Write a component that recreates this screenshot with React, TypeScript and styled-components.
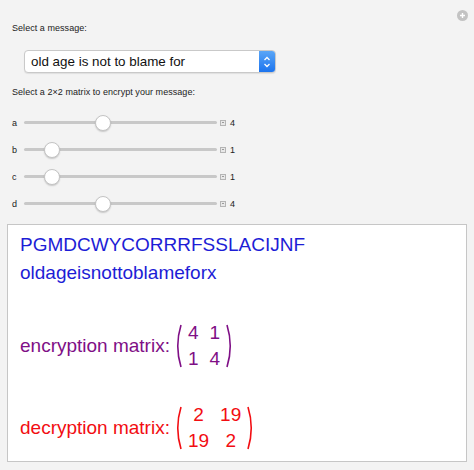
import React from 'react'
import styled, { createGlobalStyle } from 'styled-components'

const GlobalStyle = createGlobalStyle`
  html, body {
    margin: 0;
    padding: 0;
    background: #f3f3f3;
  }
  * {
    box-sizing: border-box;
  }
`

const Panel = styled.div`
  position: relative;
  width: 474px;
  height: 470px;
  background: #f3f3f3;
  padding: 22px 7px 0 7px;
  font-family: 'Liberation Sans', Arial, sans-serif;
`

const PlusBadge = styled.div`
  position: absolute;
  top: 10px;
  right: 6px;
  width: 11px;
  height: 11px;
  border-radius: 50%;
  background: #c3c3c3;
  display: flex;
  align-items: center;
  justify-content: center;
`

const Controls = styled.div`
  padding-left: 5px;
  display: flex;
  flex-direction: column;
`

const Label = styled.div<{ $top: number }>`
  font-size: 9px;
  line-height: 12px;
  color: #222;
  letter-spacing: 0.05px;
  margin-top: ${(p) => p.$top}px;
`

const Popup = styled.div`
  margin-top: 16px;
  margin-left: 12px;
  width: 252px;
  height: 23px;
  background: #fff;
  border: 1px solid #c9c9c9;
  border-radius: 4px;
  box-shadow: 0 1px 1px rgba(0, 0, 0, 0.08);
  display: flex;
  align-items: center;
  justify-content: space-between;
  overflow: hidden;
`

const PopupText = styled.span`
  font-size: 13.4px;
  color: #111;
  padding-left: 6px;
`

const Stepper = styled.div`
  width: 16px;
  height: 100%;
  background: linear-gradient(#5aa6f7, #1c74ee);
  display: flex;
  align-items: center;
  justify-content: center;
`

const Sliders = styled.div`
  margin-top: 11px;
  display: flex;
  flex-direction: column;
`

const SliderRow = styled.div`
  height: 27px;
  display: grid;
  grid-template-columns: 9px 193px 6px auto;
  column-gap: 3px;
  align-items: center;
  font-size: 9px;
  color: #222;
`

const SliderLabel = styled.span`
  color: #222;
`

const Track = styled.div`
  position: relative;
  height: 3px;
  border-radius: 2px;
  background: #c8c8c8;
`

const Thumb = styled.div`
  position: absolute;
  top: 50%;
  width: 16px;
  height: 16px;
  margin-left: -8px;
  margin-top: -8px;
  border-radius: 50%;
  background: #fff;
  border: 1px solid #c4c4c4;
  box-shadow: 0 1px 1.5px rgba(0, 0, 0, 0.18);
`

const SquarePlus = styled.div`
  width: 6px;
  height: 6px;
  border: 1px solid #b4b4b4;
  background: #e8e8e8;
  position: relative;
  &::before {
    content: '';
    position: absolute;
    left: 1px;
    right: 1px;
    top: 1.5px;
    height: 1px;
    background: #9a9a9a;
  }
`

const Value = styled.span`
  margin-left: 1px;
  font-size: 9px;
  color: #222;
`

const Output = styled.div`
  margin-top: 7px;
  width: 460px;
  height: 238px;
  background: #fff;
  border: 1px solid #c6c6c6;
  padding: 6px 12px 0 12px;
  font-size: 19px;
  font-family: 'Liberation Sans', Arial, sans-serif;
`

const Line = styled.div<{ $color: string }>`
  line-height: 28px;
  color: ${(p) => p.$color};
`

const MatrixRow = styled.div<{ $color: string; $top: number }>`
  display: flex;
  align-items: center;
  margin-top: ${(p) => p.$top}px;
  color: ${(p) => p.$color};
`

const MatrixWrap = styled.div`
  display: flex;
  align-items: center;
  margin-left: 5px;
`

const Grid = styled.div`
  display: grid;
  grid-template-columns: auto auto;
  column-gap: 11px;
  padding: 0 6px;
  line-height: 26px;
  text-align: center;
`

const Paren = ({ right }: { right?: boolean }) => (
  <svg width="7" height="44" viewBox="0 0 7 44">
    <path
      d={right ? 'M1 1 Q7.5 22 1 43' : 'M6 1 Q-0.5 22 6 43'}
      fill="none"
      stroke="currentColor"
      strokeWidth="1.6"
    />
  </svg>
)

const Matrix = ({ values }: { values: number[] }) => (
  <MatrixWrap>
    <Paren />
    <Grid>
      {values.map((v, i) => (
        <span key={i}>{v}</span>
      ))}
    </Grid>
    <Paren right />
  </MatrixWrap>
)

const sliders = [
  { name: 'a', value: 4 },
  { name: 'b', value: 1 },
  { name: 'c', value: 1 },
  { name: 'd', value: 4 },
]

// thumb centre measured: 1 -> 52px, 4 -> 103px on a track starting at 24px
const thumbLeft = (v: number) => 28 + (v - 1) * 17

export default function App() {
  return (
    <>
      <GlobalStyle />
      <Panel>
        <PlusBadge>
          <svg width="7" height="7" viewBox="0 0 7 7">
            <path d="M3.5 1v5M1 3.5h5" stroke="#fff" strokeWidth="1.4" />
          </svg>
        </PlusBadge>
        <Controls>
          <Label $top={0}>Select a message:</Label>
          <Popup>
            <PopupText>old age is not to blame for</PopupText>
            <Stepper>
              <svg width="8" height="14" viewBox="0 0 8 14">
                <path
                  d="M1.5 5 L4 2.5 L6.5 5 M1.5 9 L4 11.5 L6.5 9"
                  fill="none"
                  stroke="#fff"
                  strokeWidth="1.3"
                />
              </svg>
            </Stepper>
          </Popup>
          <Label $top={13}>Select a 2×2 matrix to encrypt your message:</Label>
          <Sliders>
            {sliders.map((s) => (
              <SliderRow key={s.name}>
                <SliderLabel>{s.name}</SliderLabel>
                <Track>
                  <Thumb style={{ left: thumbLeft(s.value) }} />
                </Track>
                <SquarePlus />
                <Value>{s.value}</Value>
              </SliderRow>
            ))}
          </Sliders>
        </Controls>
        <Output>
          <Line $color="#1d1dd6">PGMDCWYCORRRFSSLACIJNF</Line>
          <Line $color="#1d1dd6">oldageisnottoblameforx</Line>
          <MatrixRow $color="#7f0f86" $top={33}>
            <span>encryption matrix:</span>
            <Matrix values={[4, 1, 1, 4]} />
          </MatrixRow>
          <MatrixRow $color="#f20d12" $top={30}>
            <span>decryption matrix:</span>
            <Matrix values={[2, 19, 19, 2]} />
          </MatrixRow>
        </Output>
      </Panel>
    </>
  )
}
